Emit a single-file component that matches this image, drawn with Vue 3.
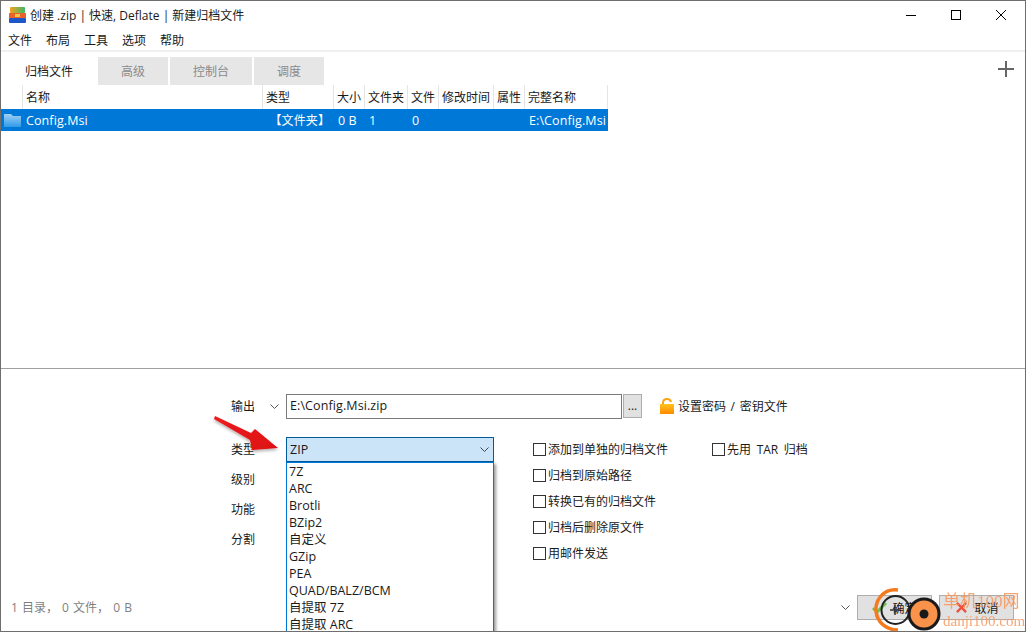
<script setup>
const menus = ['文件', '布局', '工具', '选项', '帮助']
const tabs = ['高级', '控制台', '调度']
const columns = [
  { name: '名称', width: 241 },
  { name: '类型', width: 71 },
  { name: '大小', width: 31 },
  { name: '文件夹', width: 43 },
  { name: '文件', width: 31 },
  { name: '修改时间', width: 55 },
  { name: '属性', width: 31 },
  { name: '完整名称', width: 83 }
]
const cells = [
  { text: 'Config.Msi', width: 241 },
  { text: '【文件夹】', width: 71, right: true },
  { text: '0 B', width: 31 },
  { text: '1', width: 43 },
  { text: '0', width: 31 },
  { text: '', width: 55 },
  { text: '', width: 31 },
  { text: 'E:\\Config.Msi', width: 83 }
]
const labels = ['类型', '级别', '功能', '分割']
const types = ['7Z', 'ARC', 'Brotli', 'BZip2', '自定义', 'GZip', 'PEA', 'QUAD/BALZ/BCM', '自提取 7Z', '自提取 ARC']
const checks = ['添加到单独的归档文件', '归档到原始路径', '转换已有的归档文件', '归档后删除原文件', '用邮件发送']
</script>

<template>
  <div class="window">
    <div class="titlebar">
      <svg class="logo" width="17" height="17" viewBox="0 0 17 17">
        <defs>
          <linearGradient id="logoTop" x1="0" y1="0" x2="1" y2="0">
            <stop offset="0" stop-color="#f2a21f" />
            <stop offset="1" stop-color="#3cb868" />
          </linearGradient>
        </defs>
        <rect x="1" y="0" width="15" height="6" rx="1" fill="url(#logoTop)" />
        <rect x="0" y="6" width="17" height="5" fill="#e8622a" />
        <rect x="6" y="7" width="5" height="3" fill="#f6c445" />
        <rect x="0" y="11" width="17" height="5" rx="1" fill="#1f57c8" />
      </svg>
      <span class="title">创建 .zip | 快速, Deflate | 新建归档文件</span>
      <div class="winbtns">
        <svg width="12" height="12" viewBox="0 0 12 12"><path d="M1 6.5h10" stroke="#000" fill="none" /></svg>
        <svg width="12" height="12" viewBox="0 0 12 12"><rect x="1.5" y="1.5" width="9" height="9" stroke="#000" fill="none" /></svg>
        <svg width="12" height="12" viewBox="0 0 12 12"><path d="M1 1l10 10M11 1L1 11" stroke="#000" fill="none" /></svg>
      </div>
    </div>

    <div class="menubar">
      <span v-for="m in menus" :key="m">{{ m }}</span>
    </div>

    <div class="tabbar">
      <span class="tab active">归档文件</span>
      <span v-for="t in tabs" :key="t" class="tab" :class="'tab-' + t.length">{{ t }}</span>
      <svg class="plus" width="16" height="16" viewBox="0 0 16 16"><path d="M8 0v16M0 8h16" stroke="#666" stroke-width="2" fill="none" /></svg>
    </div>

    <div class="list">
      <div class="list-head">
        <div v-for="c in columns" :key="c.name" class="head-cell" :style="{ width: c.width + 'px' }">{{ c.name }}</div>
      </div>
      <div class="list-row">
        <svg class="folder" width="17" height="14" viewBox="0 0 17 14">
          <defs>
            <linearGradient id="folderFill" x1="0" y1="0" x2="0" y2="1">
              <stop offset="0" stop-color="#9fd0f5" />
              <stop offset="1" stop-color="#2f9be8" />
            </linearGradient>
          </defs>
          <path d="M0 1h7l2 2h8v11H0z" fill="url(#folderFill)" />
        </svg>
        <div
          v-for="(c, i) in cells"
          :key="i"
          class="row-cell"
          :class="{ right: c.right }"
          :style="{ width: c.width + 'px' }"
        >{{ c.text }}</div>
      </div>
    </div>

    <div class="panel">
      <div class="output-row">
        <span class="label">输出</span>
        <svg class="chev out-chev" width="9" height="5" viewBox="0 0 9 5"><path d="M.5.5l4 4 4-4" stroke="#555" fill="none" /></svg>
        <div class="output-input">E:\Config.Msi.zip</div>
        <div class="dots">...</div>
        <svg class="lock" width="14" height="16" viewBox="0 0 14 16">
          <defs>
            <linearGradient id="lockFill" x1="0" y1="0" x2="0" y2="1">
              <stop offset="0" stop-color="#ffc31a" />
              <stop offset="1" stop-color="#ff8a00" />
            </linearGradient>
          </defs>
          <path d="M3 7V5C3 2.500 4.800 1 7 1c2 0 3.500 1 4 3" stroke="#f9a30f" stroke-width="2" fill="none" />
          <rect x="0" y="6" width="14" height="10" fill="url(#lockFill)" />
        </svg>
        <span class="lock-text">设置密码 / 密钥文件</span>
      </div>

      <div class="options">
        <div class="labels">
          <div v-for="l in labels" :key="l" class="opt-label">{{ l }}</div>
        </div>
        <div class="combo-col">
          <div class="combo">
            <span>ZIP</span>
            <svg class="chev" width="9" height="5" viewBox="0 0 9 5"><path d="M.5.5l4 4 4-4" stroke="#444" fill="none" /></svg>
          </div>
          <div class="dropdown">
            <div v-for="t in types" :key="t" class="drop-item">{{ t }}</div>
          </div>
        </div>
        <div class="checks">
          <label v-for="c in checks" :key="c" class="check"><i class="box"></i>{{ c }}</label>
        </div>
        <div class="checks second">
          <label class="check"><i class="box"></i>先用 TAR 归档</label>
        </div>
      </div>

      <div class="footer">
        <span class="status">1 目录， 0 文件， 0 B</span>
        <svg class="chev foot-chev" width="9" height="5" viewBox="0 0 9 5"><path d="M.5.5l4 4 4-4" stroke="#555" fill="none" /></svg>
        <div class="btn ok">
          <svg width="15" height="12" viewBox="0 0 15 12"><path d="M1 6l4 4 9-9" stroke="#6cc24a" stroke-width="3" fill="none" /></svg>
          <span>确定</span>
        </div>
        <div class="btn cancel">
          <svg width="11" height="11" viewBox="0 0 12 12"><path d="M1 1l10 10M11 1L1 11" stroke="#f0503c" stroke-width="2.500" fill="none" /></svg>
          <span>取消</span>
        </div>
      </div>
    </div>

    <!-- red arrow drawn over the form -->
    <svg class="arrow" width="80" height="45" viewBox="0 0 80 45">
      <defs>
        <linearGradient id="arrowFill" x1="0" y1="0" x2="1" y2="1">
          <stop offset="0" stop-color="#ee1c1f" />
          <stop offset="1" stop-color="#dc1015" />
        </linearGradient>
        <filter id="arrowShadow" x="-20%" y="-20%" width="140%" height="160%">
          <feDropShadow dx="0" dy="2" stdDeviation="1.500" flood-color="#000" flood-opacity="0.3" />
        </filter>
      </defs>
      <path d="M3 4L39 21 43 17 66 36 40 38 38 28 2 7z" fill="url(#arrowFill)" filter="url(#arrowShadow)" />
    </svg>

    <!-- site watermark -->
    <div class="watermark">
      <svg width="70" height="45" viewBox="0 0 70 45">
        <path d="M25 3C11 1 2 13 3 24c1 11 10 19 22 19" stroke="#f47a20" stroke-width="3.500" fill="none" />
        <circle cx="22.500" cy="23" r="14" stroke="#222" stroke-width="2" fill="none" />
        <path d="M22 18v10M17 23h10" stroke="#333" stroke-width="1.500" />
        <circle cx="51" cy="27" r="15" fill="#f9924a" stroke="#1a1a1a" stroke-width="3" />
        <circle cx="51" cy="27" r="4.500" fill="#1a1a1a" />
      </svg>
      <div class="wm-text">
        <div class="wm-cn">单机100网</div>
        <div class="wm-en">danji100.com</div>
      </div>
    </div>
  </div>
</template>

<style scoped>
.window {
  position: relative;
  width: 1026px;
  height: 632px;
  box-sizing: border-box;
  border: 1px solid #6e6e6e;
  background: #fff;
  display: flex;
  flex-direction: column;
  overflow: hidden;
  font-family: "Open Sans", "Noto Sans CJK SC", sans-serif;
  font-size: 12px;
  color: #1a1a1a;
}
.titlebar {
  height: 29px;
  box-sizing: border-box;
  padding-bottom: 1px;
  display: flex;
  align-items: center;
  padding-left: 8px;
  flex: none;
}
.logo {
  margin-right: 4px;
  margin-top: 1px;
}
.title {
  font-size: 12px;
}
.winbtns {
  margin-left: auto;
  display: flex;
  gap: 33px;
  padding-right: 18px;
}
.menubar {
  height: 20px;
  display: flex;
  gap: 14px;
  padding-left: 7px;
  align-items: center;
  flex: none;
}
.tabbar {
  flex: none;
  border-top: 2px solid #f0f0f0;
  height: 35px;
  box-sizing: border-box;
  display: flex;
  align-items: flex-end;
  position: relative;
  padding-left: 0;
}
.tab {
  height: 28px;
  line-height: 29px;
  text-align: center;
  background: #e6e6e6;
  color: #8a8a8a;
  margin-right: 2px;
  width: 70px;
}
.tab.active {
  background: #fff;
  color: #1a1a1a;
  width: 96px;
  margin-right: 0;
  padding-right: 1px;
}
.tab-3 {
  width: 82px;
}
.plus {
  position: absolute;
  right: 11px;
  top: 9px;
}
.list {
  flex: 1;
}
.list-head {
  height: 24px;
  display: flex;
  padding-left: 21px;
}
.head-cell {
  box-sizing: border-box;
  border-right: 1px solid #e5e5e5;
  border-left: 0;
  padding-left: 3px;
  line-height: 25px;
  white-space: nowrap;
}
.head-cell:first-child {
  border-left: 1px solid #e5e5e5;
}
.list-row {
  height: 22px;
  width: 607px;
  display: flex;
  align-items: center;
  background: #0078d7;
  color: #fff;
  position: relative;
  padding-left: 21px;
  box-sizing: border-box;
  font-size: 12.500px;
  letter-spacing: 0.1px;
}
.folder {
  position: absolute;
  left: 3px;
  top: 4px;
}
.row-cell {
  flex: none;
  box-sizing: border-box;
  padding-left: 4px;
  white-space: nowrap;
}
.row-cell.right {
  text-align: right;
  padding-right: 4px;
  font-size: 12px;
}
.panel {
  flex: none;
  height: 263px;
  box-sizing: border-box;
  border-top: 1px solid #a0a0a0;
  display: flex;
  flex-direction: column;
}
.output-row {
  margin-top: 24px;
  height: 26px;
  display: flex;
  align-items: center;
  padding-left: 230px;
}
.label {
  width: 39px;
}
.out-chev {
  margin-right: 7px;
  margin-left: 0;
}
.output-input {
  width: 336px;
  height: 25px;
  box-sizing: border-box;
  border: 1px solid #7a7a7a;
  padding-left: 3px;
  line-height: 22px;
  font-size: 12.500px;
  letter-spacing: 0.1px;
}
.dots {
  width: 19px;
  height: 24px;
  box-sizing: border-box;
  border: 1px solid #adadad;
  background: #e1e1e1;
  margin-left: 1px;
  text-align: center;
  line-height: 22px;
}
.lock {
  margin-left: 18px;
  margin-right: 4px;
}
.lock-text {
  word-spacing: 1.500px;
}
.options {
  margin-top: 18px;
  padding-left: 230px;
  display: flex;
  align-items: flex-start;
}
.labels {
  width: 55px;
  margin-top: -2px;
}
.opt-label {
  height: 30px;
  line-height: 30px;
}
.combo-col {
  width: 208px;
  position: relative;
}
.combo {
  height: 25px;
  box-sizing: border-box;
  border: 1px solid #005a9e;
  background: #cce4f7;
  display: flex;
  align-items: center;
  justify-content: space-between;
  padding: 0 4px 0 3px;
  font-size: 12.500px;
}
.dropdown {
  position: absolute;
  left: 0;
  top: 25px;
  width: 208px;
  height: 180px;
  box-sizing: border-box;
  background: #fff;
  border: 1px solid #0078d7;
  box-shadow: 2px 2px 3px rgba(0, 0, 0, 0.4);
  padding: 0 2px;
  z-index: 2;
}
.drop-item {
  height: 17px;
  line-height: 17px;
  font-size: 12.500px;
  white-space: nowrap;
}
.checks {
  margin-left: 39px;
  margin-top: -1px;
  display: flex;
  flex-direction: column;
}
.checks.second {
  margin-left: 44px;
  word-spacing: 2.500px;
}
.check {
  height: 26px;
  display: flex;
  align-items: center;
  white-space: nowrap;
}
.box {
  width: 13px;
  height: 13px;
  box-sizing: border-box;
  border: 1px solid #333;
  margin-right: 2px;
  flex: none;
}
.footer {
  margin-top: auto;
  height: 25px;
  margin-bottom: 11px;
  display: flex;
  align-items: center;
  padding-left: 10px;
  padding-right: 11px;
}
.status {
  color: #7f7f7f;
  word-spacing: 1px;
  padding-bottom: 2px;
}
.foot-chev {
  margin-left: auto;
  margin-right: 7px;
}
.btn {
  width: 75px;
  height: 25px;
  box-sizing: border-box;
  border: 1px solid #adadad;
  background: #e1e1e1;
  display: flex;
  align-items: center;
  justify-content: center;
  gap: 5px;
}
.btn.cancel {
  margin-left: 7px;
  gap: 7px;
  padding-left: 2px;
}
.arrow {
  position: absolute;
  left: 211px;
  top: 411px;
  z-index: 3;
}
.watermark {
  position: absolute;
  left: 872px;
  top: 586px;
  width: 152px;
  height: 45px;
  z-index: 4;
}
.watermark svg {
  position: absolute;
  left: 0;
  top: 0;
}
.wm-text {
  position: absolute;
  left: 70px;
  top: 6px;
  color: #f8965a;
  font-family: "Liberation Serif", "Noto Sans CJK SC", serif;
  opacity: 0.85;
}
.wm-cn {
  font-size: 17px;
  line-height: 18px;
  white-space: nowrap;
}
.wm-en {
  font-size: 15px;
  line-height: 16px;
  margin-top: 2px;
  white-space: nowrap;
}
</style>
